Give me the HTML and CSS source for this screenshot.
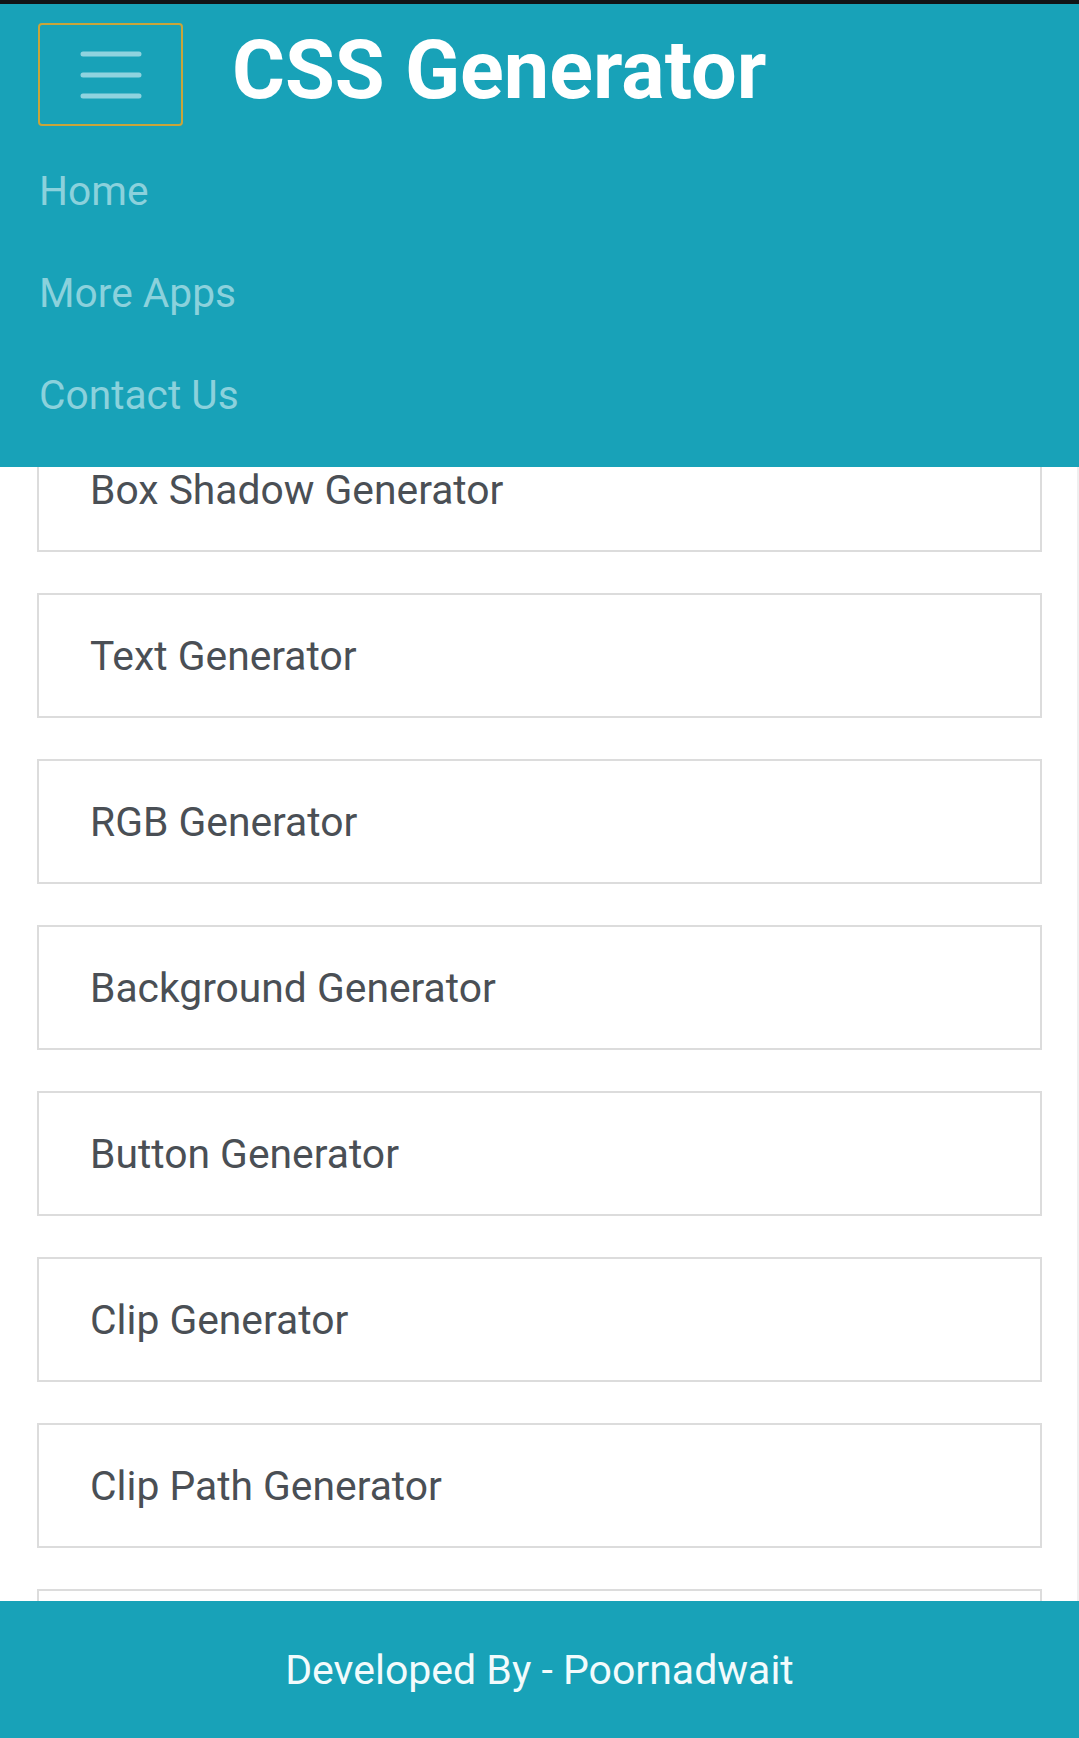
FILE: index.html
```html
<!DOCTYPE html>
<html lang="en">
<head>
<meta charset="utf-8">
<title>CSS Generator</title>
<link rel="stylesheet" href="styles.css">
</head>
<body>
<header class="topbar">
  <div class="brand-row">
    <button class="toggler" aria-label="Menu">
      <svg width="62" height="48" viewBox="0 0 62 48">
        <path d="M3 3H59M3 24H59M3 45H59" stroke="#8fd3df" stroke-width="5" stroke-linecap="round"/>
      </svg>
    </button>
    <span class="brand">CSS Generator</span>
  </div>
  <nav class="nav">
    <a class="nav-link" href="#">Home</a>
    <a class="nav-link" href="#">More Apps</a>
    <a class="nav-link" href="#">Contact Us</a>
  </nav>
</header>

<main class="list">
  <a class="card" href="#">Box Shadow Generator</a>
  <a class="card" href="#">Text Generator</a>
  <a class="card" href="#">RGB Generator</a>
  <a class="card" href="#">Background Generator</a>
  <a class="card" href="#">Button Generator</a>
  <a class="card" href="#">Clip Generator</a>
  <a class="card" href="#">Clip Path Generator</a>
  <a class="card" href="#" aria-label="More"></a>
</main>

<footer class="footer">Developed By - Poornadwait</footer>
</body>
</html>
```

FILE: styles.css
```css
* { box-sizing: border-box; }

html, body {
  margin: 0;
  padding: 0;
  background: #ffffff;
  font-family: Roboto, "Liberation Sans", Arial, sans-serif;
  overflow: hidden;
}

.topbar {
  position: fixed;
  top: 0;
  left: 0;
  right: 0;
  z-index: 10;
  height: 467px;
  background: #18a2b8;
  border-top: 4px solid #111416;
  padding: 19px 38px 0 38px;
}

.brand-row {
  display: flex;
  align-items: center;
  gap: 49px;
}

.toggler {
  width: 145px;
  height: 103px;
  display: flex;
  align-items: center;
  justify-content: center;
  background: transparent;
  border: 2px solid #c9a53a;
  border-radius: 4px;
  padding: 0;
}

.brand {
  color: #ffffff;
  font-size: 81px;
  font-weight: 700;
  line-height: 1;
  margin-bottom: 8px;
  white-space: nowrap;
}

.nav {
  display: flex;
  flex-direction: column;
  margin-top: 14px;
  padding-left: 1px;
}

.nav-link {
  color: #8bd1dc;
  font-size: 40.7px;
  line-height: 60px;
  padding: 21px 0;
  text-decoration: none;
}

.list {
  display: flex;
  flex-direction: column;
  gap: 41px;
  padding: 427px 35px 0 37px;
  border-right: 2px solid #efefef;
}

.card {
  display: flex;
  align-items: center;
  height: 125px;
  border: 2px solid #dcdcdc;
  background: #ffffff;
  padding-left: 51px;
  color: #4a4f55;
  font-size: 40.8px;
  text-decoration: none;
}

.footer {
  position: fixed;
  left: 0;
  right: 0;
  bottom: 0;
  z-index: 10;
  height: 137px;
  background: #18a2b8;
  color: #f2fbfc;
  font-size: 41px;
  display: flex;
  align-items: center;
  justify-content: center;
}
```
